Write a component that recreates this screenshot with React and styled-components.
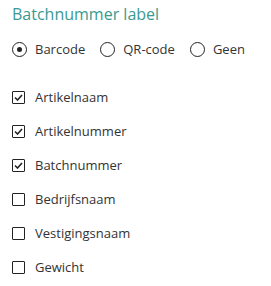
import React, { useState } from "react";
import styled, { createGlobalStyle } from "styled-components";

const GlobalStyle = createGlobalStyle`
  body {
    margin: 0;
    background: #ffffff;
    font-family: "Open Sans", "Noto Sans", sans-serif;
    color: #333333;
  }
  * {
    box-sizing: border-box;
  }
`;

const fields = [
  { id: "artikelnaam", label: "Artikelnaam", checked: true },
  { id: "artikelnummer", label: "Artikelnummer", checked: true },
  { id: "batchnummer", label: "Batchnummer", checked: true },
  { id: "bedrijfsnaam", label: "Bedrijfsnaam", checked: false },
  { id: "vestigingsnaam", label: "Vestigingsnaam", checked: false },
  { id: "gewicht", label: "Gewicht", checked: false }
];

const types = ["Barcode", "QR-code", "Geen"];

const CheckMark = () => (
  <svg width="9" height="7" viewBox="0 0 9 7">
    <path d="M1 3.5 L3.5 6 L8 1" fill="none" stroke="#222" strokeWidth="1.6" />
  </svg>
);

export default function App() {
  const [type, setType] = useState("Barcode");
  const [checked, setChecked] = useState(
    Object.fromEntries(fields.map((f) => [f.id, f.checked]))
  );

  return (
    <Container>
      <GlobalStyle />
      <Header>Batchnummer label</Header>
      <RadioGroup>
        {types.map((t) => (
          <RadioOption key={t} onClick={() => setType(t)}>
            <RadioCircle>{type === t && <RadioDot />}</RadioCircle>
            <span>{t}</span>
          </RadioOption>
        ))}
      </RadioGroup>
      <CheckList>
        {fields.map((f) => (
          <CheckRow
            key={f.id}
            onClick={() => setChecked({ ...checked, [f.id]: !checked[f.id] })}
          >
            <Box>{checked[f.id] && <CheckMark />}</Box>
            <span>{f.label}</span>
          </CheckRow>
        ))}
      </CheckList>
    </Container>
  );
}

const Container = styled.div`
  display: flex;
  flex-direction: column;
  padding: 3px 12px 0 12px;
`;

const Header = styled.h1`
  margin: 0;
  font-size: 16px;
  font-weight: 400;
  color: #3a9a92;
  line-height: 22px;
`;

const RadioGroup = styled.div`
  display: flex;
  align-items: center;
  gap: 15px;
  margin-top: 15px;
  font-size: 13px;
`;

const RadioOption = styled.label`
  display: flex;
  align-items: center;
  gap: 8px;
  cursor: pointer;
`;

const RadioCircle = styled.span`
  width: 15px;
  height: 15px;
  border: 1.6px solid #222;
  border-radius: 50%;
  display: flex;
  align-items: center;
  justify-content: center;
`;

const RadioDot = styled.span`
  width: 5px;
  height: 5px;
  border-radius: 50%;
  background: #222;
`;

const CheckList = styled.div`
  display: flex;
  flex-direction: column;
  gap: 14px;
  margin-top: 29px;
  font-size: 13px;
`;

const CheckRow = styled.label`
  display: flex;
  align-items: center;
  gap: 10px;
  height: 20px;
  cursor: pointer;
`;

const Box = styled.span`
  width: 13px;
  height: 13px;
  border: 1.6px solid #222;
  border-radius: 1px;
  display: flex;
  align-items: center;
  justify-content: center;
`;
